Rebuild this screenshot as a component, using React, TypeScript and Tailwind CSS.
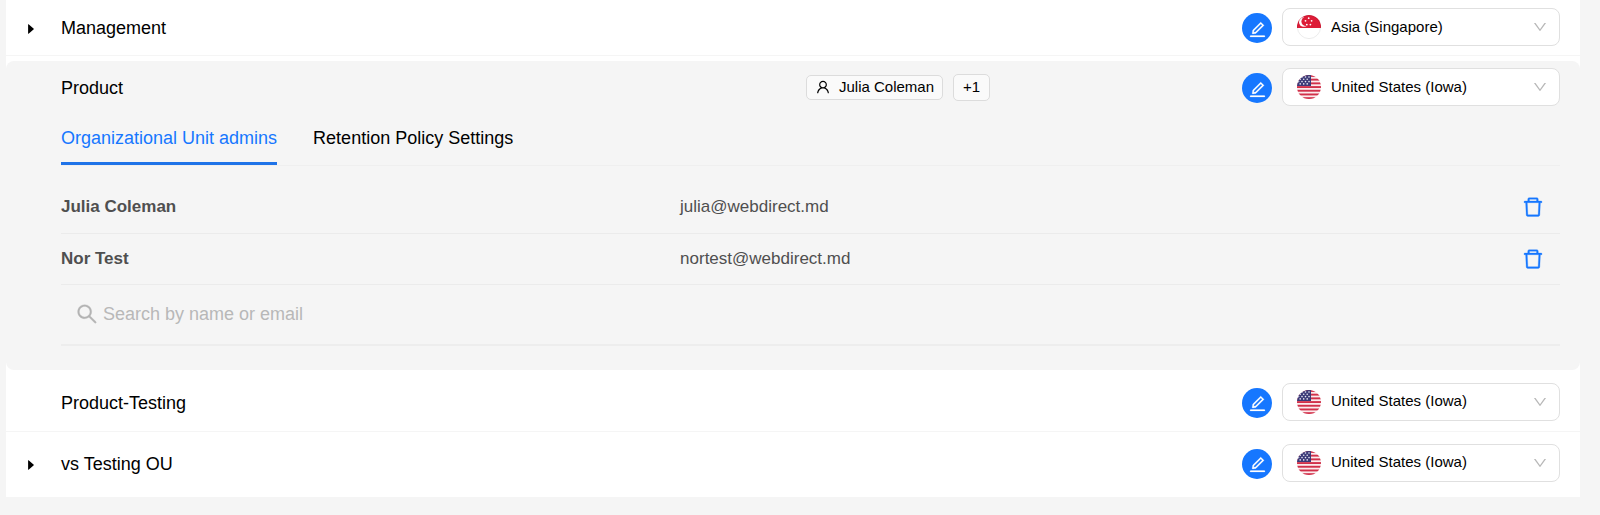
import { useState } from "react";
import type { ReactNode } from "react";
import {
  AiFillCaretRight,
  AiOutlineDelete,
  AiOutlineDown,
  AiOutlineEdit,
  AiOutlineSearch,
  AiOutlineUser,
} from "react-icons/ai";

type RegionId = "sg" | "us";

interface Admin {
  name: string;
  email: string;
}

const REGIONS: { id: RegionId; label: string }[] = [
  { id: "sg", label: "Asia (Singapore)" },
  { id: "us", label: "United States (Iowa)" },
];

const ADMINS: Admin[] = [
  { name: "Julia Coleman", email: "julia@webdirect.md" },
  { name: "Nor Test", email: "nortest@webdirect.md" },
];

const TABS = ["Organizational Unit admins", "Retention Policy Settings"];

function SingaporeFlag() {
  return (
    <svg viewBox="0 0 24 24" className="h-6 w-6" aria-hidden="true">
      <clipPath id="sg-clip">
        <circle cx="12" cy="12" r="12" />
      </clipPath>
      <g clipPath="url(#sg-clip)">
        <rect width="24" height="24" fill="#fff" />
        <rect width="24" height="13" fill="#dd1c37" />
        <circle cx="6.8" cy="7" r="4.8" fill="#fff" />
        <circle cx="9" cy="6.4" r="4.6" fill="#dd1c37" />
        <g fill="#fff">
          <circle cx="11.7" cy="3.2" r="0.9" />
          <circle cx="8.5" cy="5.8" r="0.9" />
          <circle cx="14.6" cy="5.8" r="0.9" />
          <circle cx="9.8" cy="9.6" r="0.9" />
          <circle cx="13.4" cy="9.6" r="0.9" />
        </g>
      </g>
      <circle cx="12" cy="12" r="11.6" fill="none" stroke="#000" strokeOpacity="0.1" strokeWidth="0.8" />
    </svg>
  );
}

const STRIPES = [0, 1, 2, 3, 4, 5, 6];
const STARS = [
  [5, 2], [8.5, 2], [12, 2],
  [3.2, 4.3], [6.7, 4.3], [10.2, 4.3],
  [1.6, 6.6], [5, 6.6], [8.5, 6.6], [12, 6.6],
  [3.2, 8.9], [6.7, 8.9], [10.2, 8.9],
];

function UsFlag({ id }: { id: string }) {
  return (
    <svg viewBox="0 0 24 24" className="h-6 w-6" aria-hidden="true">
      <clipPath id={id}>
        <circle cx="12" cy="12" r="12" />
      </clipPath>
      <g clipPath={`url(#${id})`}>
        <rect width="24" height="24" fill="#fbeaec" />
        {STRIPES.map((n) => (
          <rect key={n} y={n * 3.7} width="24" height="1.9" fill="#d1304a" />
        ))}
        <rect width="14" height="11" fill="#3b3a78" />
        {STARS.map(([x, y]) => (
          <circle key={`${x}-${y}`} cx={x} cy={y} r="0.8" fill="#e8e8f2" />
        ))}
      </g>
    </svg>
  );
}

function RegionSelect({ unit, initial }: { unit: string; initial: RegionId }) {
  const [region, setRegion] = useState<RegionId>(initial);
  const slug = unit.toLowerCase().replace(/\s+/g, "-");

  return (
    <div className="relative w-[278px]">
      <select
        aria-label={`Region for ${unit}`}
        value={region}
        onChange={(e) => setRegion(e.target.value as RegionId)}
        className="block h-[38px] w-full appearance-none rounded-lg border border-[#e0e0e0] bg-white pl-12 pr-10 text-[15px] text-black"
      >
        {REGIONS.map((r) => (
          <option key={r.id} value={r.id}>
            {r.label}
          </option>
        ))}
      </select>
      <span className="pointer-events-none absolute inset-y-0 left-[15px] flex items-center">
        {region === "sg" ? <SingaporeFlag /> : <UsFlag id={`flag-${slug}`} />}
      </span>
      <AiOutlineDown className="pointer-events-none absolute right-3 top-[11px] h-4 w-4 text-[#b8b8b8]" />
    </div>
  );
}

interface UnitRowProps {
  name: string;
  region: RegionId;
  expandable?: boolean;
  children?: ReactNode;
}

function UnitRow({ name, region, expandable, children }: UnitRowProps) {
  return (
    <div className="grid grid-cols-[55px_minmax(0,745fr)_minmax(0,436fr)_auto] items-center pr-5">
      <div className="flex pl-[18px]">
        {expandable && (
          <button type="button" aria-label={`Expand ${name}`} className="pt-1">
            <AiFillCaretRight className="h-3.5 w-3.5 text-black" />
          </button>
        )}
      </div>
      <span className="pt-0.5 text-lg leading-6 text-black">{name}</span>
      <div className="flex items-center gap-2.5">{children}</div>
      <div className="flex items-center gap-2.5">
        <button
          type="button"
          aria-label={`Edit ${name}`}
          className="mt-0.5 flex h-[30px] w-[30px] items-center justify-center rounded-full bg-[#1677ff] pt-0.5 text-white"
        >
          <AiOutlineEdit className="h-[19px] w-[19px] stroke-[12]" />
        </button>
        <RegionSelect unit={name} initial={region} />
      </div>
    </div>
  );
}

function AdminTable() {
  return (
    <table className="mt-4 w-full table-fixed text-[17px] leading-6 text-[#4f4f4f]">
      <colgroup>
        <col className="w-[41.3%]" />
        <col />
        <col className="w-20" />
      </colgroup>
      <tbody>
        {ADMINS.map((admin) => (
          <tr key={admin.email} className="h-[51px] border-b border-[#ebebeb]">
            <th scope="row" className="text-left font-bold">
              {admin.name}
            </th>
            <td>{admin.email}</td>
            <td>
              <button
                type="button"
                aria-label={`Remove ${admin.name}`}
                className="ml-auto mr-[15px] block text-[#1677ff]"
              >
                <AiOutlineDelete className="h-6 w-6 stroke-[12]" />
              </button>
            </td>
          </tr>
        ))}
      </tbody>
    </table>
  );
}

export default function App() {
  const [tab, setTab] = useState(TABS[0]);

  return (
    <div className="min-h-screen bg-[#f5f5f5] pl-1.5 pr-5 font-['Liberation_Sans',Arial,sans-serif]">
      <div className="bg-white">
        <div className="border-b border-[#f5f5f5] pb-[9px] pt-2">
          <UnitRow name="Management" region="sg" expandable />
        </div>

        {/* Expanded unit */}
        <section className="mt-[5px] rounded-lg bg-[#f5f5f5] pb-6 pt-[7px]">
          <UnitRow name="Product" region="us">
            <span className="flex h-[25px] items-center gap-2 rounded-[5px] border border-[#dcdcdc] bg-[#fafafa] px-2 text-[15px] text-black">
              <AiOutlineUser className="h-4 w-4" />
              Julia Coleman
            </span>
            <span className="flex h-[27px] items-center rounded-[5px] border border-[#dcdcdc] bg-[#fafafa] px-[9px] text-[15px] text-black">
              +1
            </span>
          </UnitRow>

          <div className="ml-[55px] mr-5">
            <div role="tablist" className="flex gap-9 border-b border-[#efefef] pt-5">
              {TABS.map((t) => (
                <button
                  key={t}
                  type="button"
                  role="tab"
                  aria-selected={t === tab}
                  onClick={() => setTab(t)}
                  className={`border-b-[3px] pb-3 text-lg leading-6 ${
                    t === tab ? "border-[#1f73e8] text-[#1677ff]" : "border-transparent text-black"
                  }`}
                >
                  {t}
                </button>
              ))}
            </div>

            <AdminTable />

            <label className="flex h-[61px] items-center gap-1 border-b-2 border-[#ededed] pl-3.5 text-[#b3b3b3]">
              <AiOutlineSearch className="h-6 w-6 stroke-[12]" />
              <input
                type="text"
                aria-label="Search by name or email"
                placeholder="Search by name or email"
                className="flex-1 bg-transparent text-lg leading-6 text-[#4f4f4f] outline-none placeholder:text-[#b8b8b8]"
              />
            </label>
          </div>
        </section>

        <div className="border-b border-[#f5f5f5] pb-2.5 pt-[13px]">
          <UnitRow name="Product-Testing" region="us" />
        </div>
        <div className="pb-[15px] pt-3">
          <UnitRow name="vs Testing OU" region="us" expandable />
        </div>
      </div>
    </div>
  );
}
